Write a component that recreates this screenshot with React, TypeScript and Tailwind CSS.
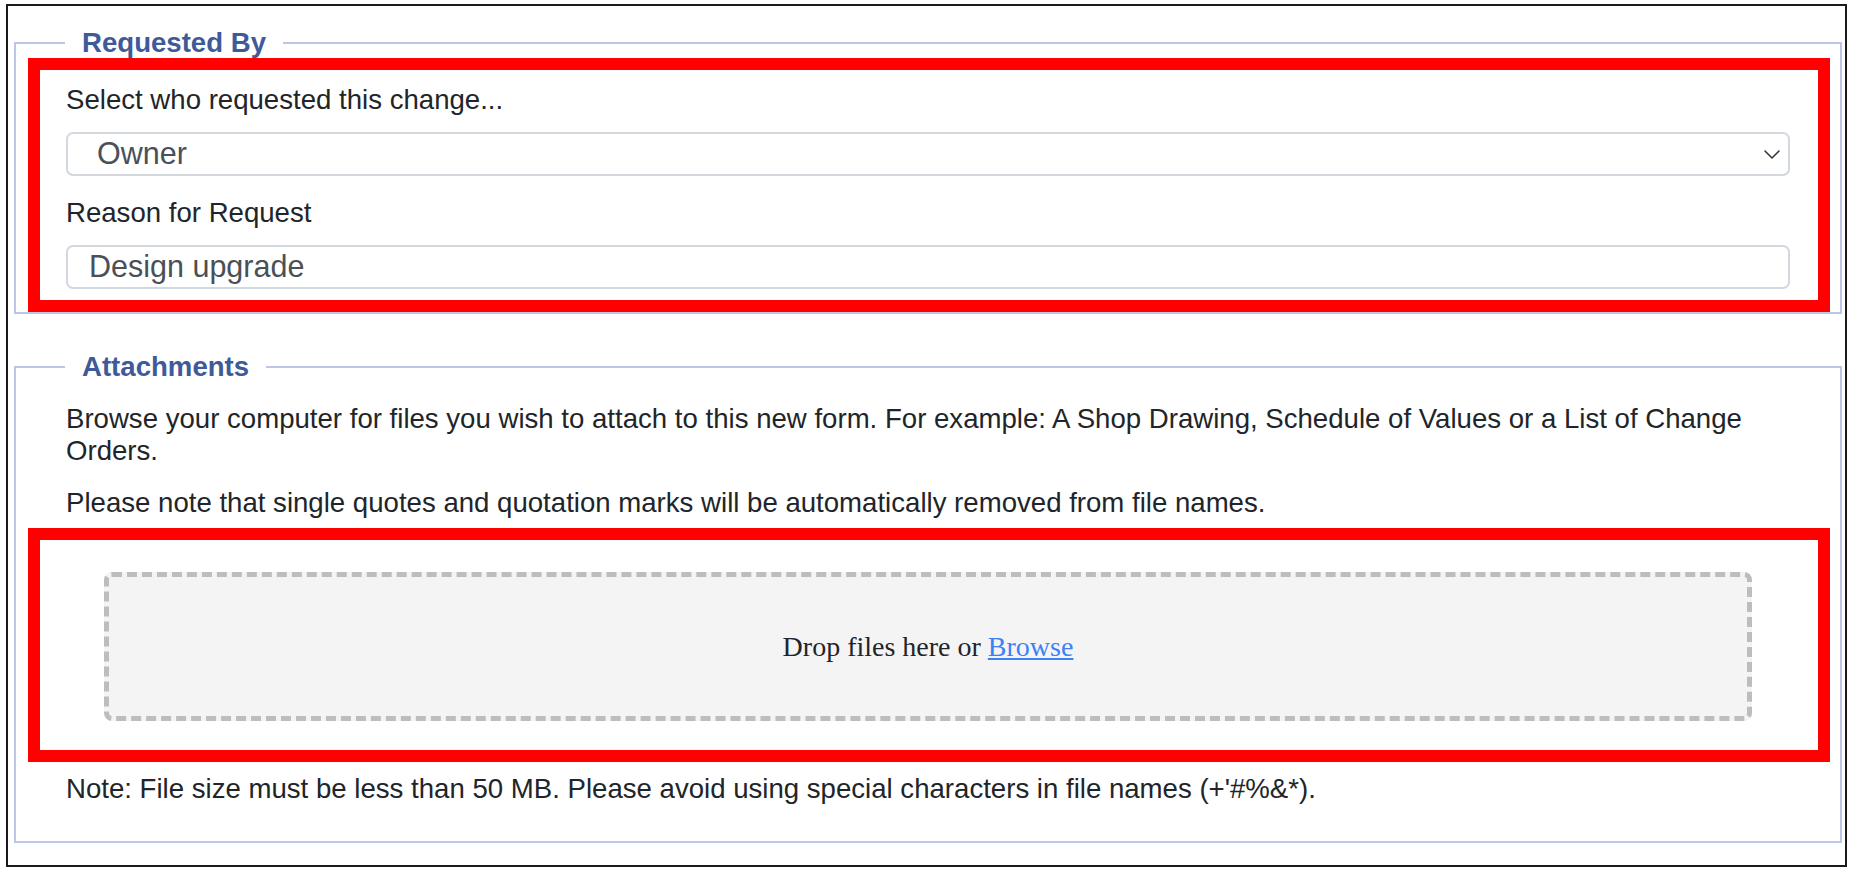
import React from 'react';

const sans = "font-['Liberation_Sans',Arial,sans-serif]";

const Chevron = () => (
  <svg width="16" height="9" viewBox="0 0 16 9" fill="none" className="shrink-0">
    <polyline points="1,1 8,8 15,1" stroke="#343a40" strokeWidth="1.6" strokeLinecap="round" strokeLinejoin="round" />
  </svg>
);

const Legend: React.FC<{ children: React.ReactNode }> = ({ children }) => (
  <legend className="ml-[37px] px-[17px] text-[27.6px] leading-[30px] font-bold text-[#3f5a99]">
    {children}
  </legend>
);

export default function App() {
  return (
    <div className={`${sans} bg-white w-[1852px] h-[874px] pt-[4px] pl-[6px]`}>
      <div className="w-[1841px] h-[863px] border-2 border-[#1a1a1a] text-[#212529]">
        {/* Requested By */}
        <fieldset className="ml-[6px] mr-[3px] mt-[22px] border-2 border-[#bcc6e6] pl-[12px] pr-[10px] pb-0">
          <Legend>Requested By</Legend>
          <div className="border-[12px] border-[#ff0000] pl-[26px] pr-[28px] pt-[14px] pb-[11px]">
            <div className="text-[27.6px] leading-[32px]">Select who requested this change...</div>
            <div className="mt-[16px] h-[44px] flex items-center justify-between border-2 border-[#d3d8de] rounded-[7px] pl-[29px] pr-[8px]">
              <span className="text-[30.5px] text-[#495057]">Owner</span>
              <Chevron />
            </div>
            <div className="mt-[21px] text-[27.6px] leading-[32px]">Reason for Request</div>
            <input
              readOnly
              value="Design upgrade"
              className="mt-[16px] block w-full h-[44px] border-2 border-[#d3d8de] rounded-[7px] pl-[21px] text-[30.5px] text-[#495057] outline-none"
            />
          </div>
        </fieldset>

        {/* Attachments */}
        <fieldset className="ml-[6px] mr-[3px] mt-[38px] mb-[22px] border-2 border-[#bcc6e6] pl-[12px] pr-[10px] pb-[36px]">
          <Legend>Attachments</Legend>
          <div className="pt-[21px] text-[27.6px] leading-[32px]">
            <p className="pl-[38px] pr-[38px]">
              Browse your computer for files you wish to attach to this new form. For example: A Shop Drawing, Schedule of Values or a List of Change Orders.
            </p>
            <p className="mt-[20px] pl-[38px] pr-[38px]">
              Please note that single quotes and quotation marks will be automatically removed from file names.
            </p>
          </div>
          <div className="mt-[9px] border-[12px] border-[#ff0000] pt-[32px] pb-[29px] pl-[64px] pr-[66px]">
            <div className="h-[149px] flex items-center justify-center border-[5px] border-dashed border-[#bdbdbd] rounded-[8px] bg-[#f4f4f4] font-['Liberation_Serif','Times_New_Roman',serif] text-[28px] text-[#212529]">
              <span>
                Drop files here or <a href="#" className="text-[#3b82f6] underline">Browse</a>
              </span>
            </div>
          </div>
          <p className="mt-[11px] pl-[38px] text-[27.6px] leading-[32px]">
            Note: File size must be less than 50 MB. Please avoid using special characters in file names (+'#%&amp;*).
          </p>
        </fieldset>
      </div>
    </div>
  );
}
